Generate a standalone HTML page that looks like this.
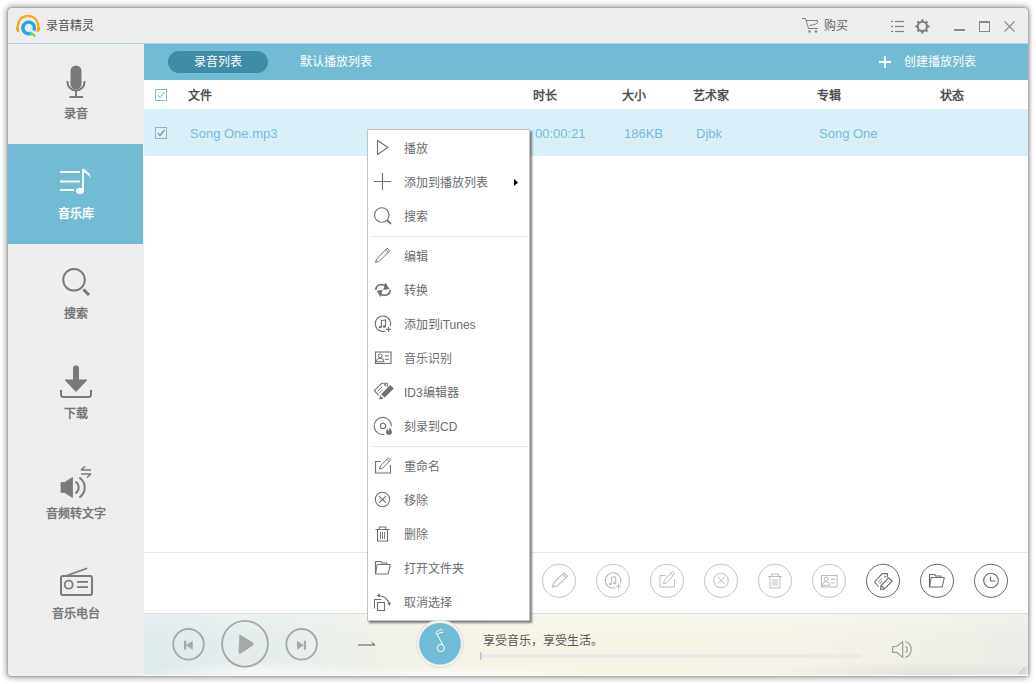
<!DOCTYPE html>
<html lang="zh-CN"><head><meta charset="utf-8">
<style>
*{margin:0;padding:0;box-sizing:border-box}
html,body{width:1036px;height:684px;overflow:hidden;background:#fff;font-family:"Liberation Sans",sans-serif;font-size:12px}
.r{position:absolute}
.t{position:absolute;white-space:nowrap;line-height:16px;font-size:12px}
.b{font-weight:bold}
svg{position:absolute;left:0;top:0}
</style></head><body>

<div class="r" style="left:7px;top:7px;width:1022px;height:670px;background:#eeeeee;border:1px solid #adadad;border-radius:5px 5px 4px 4px;box-shadow:0 0 6px rgba(0,0,0,0.5)"></div>
<div class="r" style="left:8px;top:43px;width:1020px;height:1px;background:#a9d8ea;"></div>
<div class="t " style="left:46px;top:18px;color:#555;">录音精灵</div>
<div class="t " style="left:824px;top:18px;color:#666;">购买</div>
<div class="r" style="left:8px;top:144px;width:136px;height:100px;background:#72bbd5;"></div>
<div class="t b" style="left:64px;top:106px;color:#777;">录音</div>
<div class="t b" style="left:58px;top:206px;color:#fff;">音乐库</div>
<div class="t b" style="left:64px;top:306px;color:#777;">搜索</div>
<div class="t b" style="left:64px;top:406px;color:#777;">下载</div>
<div class="t b" style="left:46px;top:506px;color:#777;">音频转文字</div>
<div class="t b" style="left:52px;top:606px;color:#777;">音乐电台</div>
<div class="r" style="left:144px;top:44px;width:884px;height:632px;background:#ffffff;"></div>
<div class="r" style="left:143px;top:44px;width:1px;height:632px;background:#f4efee;"></div>
<div class="r" style="left:144px;top:44px;width:884px;height:36px;background:#72bbd5;"></div>
<div class="r" style="left:168px;top:51px;width:100px;height:22px;background:#3f8ca8;border-radius:11px"></div>
<div class="t " style="left:194px;top:54px;color:#fff;">录音列表</div>
<div class="t " style="left:300px;top:54px;color:#fff;">默认播放列表</div>
<div class="t " style="left:904px;top:54px;color:#fff;">创建播放列表</div>
<div class="t b" style="left:188px;top:88px;color:#505050;">文件</div>
<div class="t b" style="left:533px;top:88px;color:#505050;">时长</div>
<div class="t b" style="left:622px;top:88px;color:#505050;">大小</div>
<div class="t b" style="left:693px;top:88px;color:#505050;">艺术家</div>
<div class="t b" style="left:817px;top:88px;color:#505050;">专辑</div>
<div class="t b" style="left:940px;top:88px;color:#505050;">状态</div>
<div class="r" style="left:144px;top:109px;width:884px;height:47px;background:#d9f0f8;"></div>
<div class="t " style="left:190px;top:126px;color:#72bcd8;font-size:13px">Song One.mp3</div>
<div class="t " style="left:535px;top:126px;color:#72bcd8;font-size:13px">00:00:21</div>
<div class="t " style="left:624px;top:126px;color:#72bcd8;font-size:13px">186KB</div>
<div class="t " style="left:696px;top:126px;color:#72bcd8;font-size:13px">Djbk</div>
<div class="t " style="left:819px;top:126px;color:#72bcd8;font-size:13px">Song One</div>
<div class="r" style="left:144px;top:552px;width:884px;height:1px;background:#e8e8e8;"></div>
<div class="r" style="left:144px;top:613px;width:884px;height:63px;background:radial-gradient(ellipse 120px 10px at 120px 58px,rgba(255,255,255,0.6),rgba(255,255,255,0)),radial-gradient(ellipse 160px 8px at 300px 60px,rgba(255,255,255,0.45),rgba(255,255,255,0)),radial-gradient(ellipse 160px 14px at 780px 62px,rgba(200,200,195,0.35),rgba(200,200,195,0)),linear-gradient(180deg,rgba(255,255,255,0.25),rgba(255,255,255,0) 40%),linear-gradient(90deg,#dfeaed 0%,#e6eeec 15%,#f1f2e8 28%,#f7f5e7 40%,#f6f4e8 72%,#f1f0e8 90%,#ecece7 100%);"></div>
<div class="r" style="left:144px;top:613px;width:884px;height:1px;background:#dcdcdc;"></div>
<div class="r" style="left:144px;top:675px;width:884px;height:1px;background:#fbfbf8;"></div>
<div class="r" style="left:1030px;top:0px;width:6px;height:684px;background:linear-gradient(90deg,rgba(255,255,255,0),#fff 70%);"></div>
<div class="r" style="left:481px;top:654px;width:380px;height:4px;background:#e9ebeb;"></div>
<div class="t " style="left:483px;top:633px;color:#555;">享受音乐，享受生活。</div>
<div class="r" style="left:367px;top:129px;width:163px;height:492px;background:#fff;border:1px solid #c4c4c4;box-shadow:2px 2px 2px rgba(0,0,0,0.5)"></div>
<div class="t " style="left:404px;top:141px;color:#6c6c6c;">播放</div>
<div class="t " style="left:404px;top:175px;color:#6c6c6c;">添加到播放列表</div>
<div class="t " style="left:404px;top:209px;color:#6c6c6c;">搜索</div>
<div class="t " style="left:404px;top:249px;color:#6c6c6c;">编辑</div>
<div class="t " style="left:404px;top:283px;color:#6c6c6c;">转换</div>
<div class="t " style="left:404px;top:317px;color:#6c6c6c;">添加到iTunes</div>
<div class="t " style="left:404px;top:351px;color:#6c6c6c;">音乐识别</div>
<div class="t " style="left:404px;top:385px;color:#6c6c6c;">ID3编辑器</div>
<div class="t " style="left:404px;top:419px;color:#6c6c6c;">刻录到CD</div>
<div class="t " style="left:404px;top:459px;color:#6c6c6c;">重命名</div>
<div class="t " style="left:404px;top:493px;color:#6c6c6c;">移除</div>
<div class="t " style="left:404px;top:527px;color:#6c6c6c;">删除</div>
<div class="t " style="left:404px;top:561px;color:#6c6c6c;">打开文件夹</div>
<div class="t " style="left:404px;top:595px;color:#6c6c6c;">取消选择</div>
<div class="r" style="left:371px;top:236px;width:156px;height:1px;background:#e6e6e6;"></div>
<div class="r" style="left:371px;top:446px;width:156px;height:1px;background:#e6e6e6;"></div>
<svg width="1036" height="684" viewBox="0 0 1036 684"><path d="M17.8,26 A10.2,10.2 0 0 1 38.2,26" fill="none" stroke="#fba91a" stroke-width="2.2"/><path d="M18.5,25.3 Q16,25.5 15.8,28.7 Q16,32 19.5,32.2 Z" fill="#fba91a"/><path d="M37.5,25.3 Q40,25.5 40.2,28.7 Q40,32 36.5,32.2 Z" fill="#fba91a"/><path d="M31.8,32.8 A5.8,5.8 0 1 1 33.8,30.6" fill="none" stroke="#1fa9ec" stroke-width="3.4"/><path d="M30.8,32.8 L34.5,35.6" fill="none" stroke="#73d34c" stroke-width="2.2" stroke-linecap="round"/><path d="M802,18.5 H805.5 L808.5,28.5 H818 M806.5,20.5 H817.5 V22.5 Q817,24.5 809.5,25.5" fill="none" stroke="#808080" stroke-width="1"/><circle cx="809.5" cy="31.5" r="1.2" fill="#808080"/><circle cx="816" cy="31.5" r="1.2" fill="#808080"/><rect x="891" y="20.9" width="2" height="1.2" fill="#808080"/><rect x="895" y="20.9" width="9" height="1.2" fill="#808080"/><rect x="891" y="25.9" width="2" height="1.2" fill="#808080"/><rect x="895" y="25.9" width="9" height="1.2" fill="#808080"/><rect x="891" y="30.9" width="2" height="1.2" fill="#808080"/><rect x="895" y="30.9" width="9" height="1.2" fill="#808080"/><circle cx="922.4" cy="26.4" r="4.6" fill="none" stroke="#808080" stroke-width="2.1"/><line x1="927.40" y1="26.40" x2="929.50" y2="26.40" stroke="#808080" stroke-width="2.2"/><line x1="925.94" y1="29.94" x2="927.42" y2="31.42" stroke="#808080" stroke-width="2.2"/><line x1="922.40" y1="31.40" x2="922.40" y2="33.50" stroke="#808080" stroke-width="2.2"/><line x1="918.86" y1="29.94" x2="917.38" y2="31.42" stroke="#808080" stroke-width="2.2"/><line x1="917.40" y1="26.40" x2="915.30" y2="26.40" stroke="#808080" stroke-width="2.2"/><line x1="918.86" y1="22.86" x2="917.38" y2="21.38" stroke="#808080" stroke-width="2.2"/><line x1="922.40" y1="21.40" x2="922.40" y2="19.30" stroke="#808080" stroke-width="2.2"/><line x1="925.94" y1="22.86" x2="927.42" y2="21.38" stroke="#808080" stroke-width="2.2"/><rect x="954" y="29" width="11" height="2" fill="#8a8a8a"/><rect x="979.5" y="21.5" width="10" height="10" fill="none" stroke="#8a8a8a" stroke-width="1"/><rect x="979" y="21" width="11" height="2" fill="#8a8a8a"/><path d="M1004.5,21.5 L1014.5,31.5 M1014.5,21.5 L1004.5,31.5" stroke="#8a8a8a" stroke-width="1.1"/><rect x="70.5" y="65.5" width="11" height="24" rx="5.5" fill="#7a7a7a"/><path d="M67.5,81 V82 A8.5,8.5 0 0 0 84.5,82 V81" fill="none" stroke="#7a7a7a" stroke-width="2"/><rect x="75" y="90" width="2" height="6" fill="#7a7a7a"/><rect x="69.5" y="96" width="13.5" height="2" fill="#7a7a7a"/><rect x="60" y="171" width="20" height="2" fill="#fff"/><rect x="60" y="180.5" width="20" height="2" fill="#fff"/><rect x="60" y="189" width="14" height="2" fill="#fff"/><rect x="82" y="169" width="2" height="22" fill="#fff"/><ellipse cx="80" cy="191" rx="4" ry="3.3" fill="#fff"/><path d="M83,168.5 Q89.5,171.5 91.2,178.5 Q88.5,174 83,172 Z" fill="#fff"/><circle cx="74" cy="279.8" r="10.8" fill="none" stroke="#7a7a7a" stroke-width="2"/><line x1="83.5" y1="289.5" x2="89" y2="295" stroke="#7a7a7a" stroke-width="3"/><rect x="73" y="365.5" width="6" height="16" rx="2.5" fill="#7a7a7a"/><path d="M65,380 H87 L76,391.5 Z" fill="#7a7a7a" stroke="#7a7a7a" stroke-width="1" stroke-linejoin="round"/><path d="M61,390 V394.5 Q61,397 63.5,397 H88.5 Q91,397 91,394.5 V390" fill="none" stroke="#7a7a7a" stroke-width="2"/><path d="M61,482.5 H64.5 L72.5,477.5 V497.5 L64.5,492.5 H61 Z" fill="#7a7a7a" stroke="#7a7a7a" stroke-width="0.8" stroke-linejoin="round"/><path d="M76,482 A7,7 0 0 1 76,493" fill="none" stroke="#7a7a7a" stroke-width="2" stroke-linecap="round"/><path d="M80,478 A12,12 0 0 1 80,497" fill="none" stroke="#7a7a7a" stroke-width="2" stroke-linecap="round"/><path d="M81,470 H91 M81,470 L85,466.5 M91,474 H81 M91,474 L87,477.5" fill="none" stroke="#7a7a7a" stroke-width="1.6"/><rect x="61" y="576" width="31" height="19" rx="2" fill="none" stroke="#7a7a7a" stroke-width="2"/><line x1="67" y1="575.5" x2="86.5" y2="568.5" stroke="#7a7a7a" stroke-width="1.8" stroke-linecap="round"/><circle cx="68.7" cy="584.7" r="4" fill="none" stroke="#7a7a7a" stroke-width="1.8"/><rect x="77" y="581" width="11" height="1.8" fill="#7a7a7a"/><rect x="77" y="586.2" width="11" height="1.8" fill="#7a7a7a"/><rect x="879" y="61" width="12" height="2" fill="#fff"/><rect x="884" y="56" width="2" height="12" fill="#fff"/><rect x="155.5" y="89.5" width="11" height="11" fill="#fff" stroke="#7fbcd2" stroke-width="1"/><path d="M157.8,95 L160,97.5 L164.5,92" fill="none" stroke="#a6d2d6" stroke-width="1.3"/><rect x="155.5" y="127.5" width="11" height="11" fill="#ececec" stroke="#7fbcd2" stroke-width="1"/><path d="M157.8,133 L160,135.5 L164.5,130" fill="none" stroke="#5f9fb6" stroke-width="1.3"/><path d="M377.5,140.5 L388,147.5 L377.5,154.5 Z" fill="none" stroke="#707070" stroke-width="1.1" stroke-linejoin="round"/><path d="M374,181.5 H391 M382.5,173 V190" stroke="#707070" stroke-width="1.1"/><circle cx="381.8" cy="215" r="7.3" fill="none" stroke="#707070" stroke-width="1.1"/><line x1="387" y1="220" x2="391" y2="224" stroke="#707070" stroke-width="1.8"/><path d="M375.50,262.50 L379.32,261.23 L389.77,250.77 L387.23,248.23 L376.77,258.68 Z" fill="none" stroke="#707070" stroke-width="1.0" stroke-linejoin="round"/><line x1="388.22" y1="252.33" x2="385.67" y2="249.78" stroke="#707070" stroke-width="1.0"/><path d="M375.6,290 Q376.3,284.6 381.8,284.5 Q384.3,284.6 386,286.3" fill="none" stroke="#707070" stroke-width="1.7"/><path d="M385.4,282.6 L389.4,289 L383.3,289.9 Z" fill="#707070"/><g transform="rotate(180 383 289.9)"><path d="M375.6,290 Q376.3,284.6 381.8,284.5 Q384.3,284.6 386,286.3" fill="none" stroke="#707070" stroke-width="1.7"/><path d="M385.4,282.6 L389.4,289 L383.3,289.9 Z" fill="#707070"/></g><path d="M390.20,326.40 A7.7,7.7 0 1 0 385.50,331.00" fill="none" stroke="#707070" stroke-width="1.1"/><path d="M381.40,326.90 V320.50 L385.60,320.00 V326.30" fill="none" stroke="#707070" stroke-width="1.1" stroke-linejoin="round"/><ellipse cx="380.20" cy="327.10" rx="1.5" ry="1.2" fill="#707070"/><ellipse cx="384.40" cy="326.50" rx="1.5" ry="1.2" fill="#707070"/><path d="M386.00,329.40 H391.00 M388.50,326.90 V331.90" stroke="#707070" stroke-width="1.1"/><rect x="375.5" y="352.0" width="15.5" height="11.5" fill="none" stroke="#707070" stroke-width="1.1"/><circle cx="380.15" cy="355.80" r="2" fill="none" stroke="#707070" stroke-width="1"/><path d="M376.15,361.80 Q376.65,358.17 380.15,358.17 Q383.65,358.17 384.15,361.80 Z" fill="none" stroke="#707070" stroke-width="1"/><path d="M384.92,355.87 H389.00 M384.92,359.32 H389.00" stroke="#707070" stroke-width="1"/><path d="M378.5,395.4 L374.3,390.6 L381.8,383.2 H387.3 V386.8" fill="none" stroke="#707070" stroke-width="1.1" stroke-linejoin="round"/><circle cx="385" cy="385" r="1" fill="#707070"/><path d="M377.6,391.4 L382,387 M379.6,392.6 L382.6,389.6" stroke="#707070" stroke-width="1"/><path d="M384.5,397.7 L381.1,394.3 L390.3,385.1 L393.7,388.5 Z M379.4,399.4 L380.1,395.3 L383.5,398.7 Z" fill="#707070"/><path d="M391.4,426.2 A8.6,8.6 0 1 0 384.4,434.4" fill="none" stroke="#707070" stroke-width="1.1"/><circle cx="383" cy="425.9" r="2.6" fill="none" stroke="#707070" stroke-width="1.1"/><path d="M386.2,433 Q385.6,430.5 387.5,428.4 Q387.9,430.3 388.9,431.2 Q389.3,429 389.6,427.3 Q391.5,429.5 392,431.8 Q392.2,434.4 390.2,434.8 H387.6 Q386.4,434.4 386.2,433 Z" fill="#707070"/><path d="M381.00,461.50 H375.50 V473.00 H390.50 V465.00" fill="none" stroke="#707070" stroke-width="1.1"/><path d="M379.50,469.00 L382.89,467.87 L390.63,460.13 L388.37,457.87 L380.63,465.61 Z" fill="none" stroke="#707070" stroke-width="1.0" stroke-linejoin="round"/><line x1="389.08" y1="461.69" x2="386.81" y2="459.42" stroke="#707070" stroke-width="1.0"/><circle cx="382.5" cy="499.5" r="7.2" fill="none" stroke="#707070" stroke-width="1.1"/><path d="M379.04,496.04 L385.96,502.96 M385.96,496.04 L379.04,502.96" stroke="#707070" stroke-width="1.1"/><path d="M375.50,529.50 H389.50 M379.30,529.50 V527.00 H385.70 V529.50 M377.50,529.50 V541.00 H387.50 V529.50" fill="none" stroke="#707070" stroke-width="1.1"/><path d="M380.50,532.00 V539.00 M382.50,532.00 V539.00 M384.50,532.00 V539.00" stroke="#707070" stroke-width="0.9"/><path d="M375.5,574 V561.5 H380.5 L382,563 H387 V564.5" fill="none" stroke="#707070" stroke-width="1.1" stroke-linejoin="round"/><path d="M375.5,574 L377.2,564.5 H390.3 L388.2,574 Z" fill="none" stroke="#707070" stroke-width="1.1" stroke-linejoin="round"/><rect x="377.5" y="602.5" width="7" height="8" fill="none" stroke="#707070" stroke-width="1.1"/><path d="M374.5,608.5 V599.5 H381.5" fill="none" stroke="#707070" stroke-width="1.1"/><path d="M378.5,595.8 Q386.5,596 389.3,603.5" fill="none" stroke="#707070" stroke-width="1.1"/><path d="M376.5,595.5 L380,593.5 L379.8,597.5 Z M389.5,606 L387.2,602.8 L391.2,602.6 Z" fill="#707070"/><path d="M514,179 L518,182.5 L514,186 Z" fill="#000"/><circle cx="559" cy="580.8" r="16.5" fill="none" stroke="#c4c4c4" stroke-width="1"/><circle cx="613" cy="580.8" r="16.5" fill="none" stroke="#c4c4c4" stroke-width="1"/><circle cx="667" cy="580.8" r="16.5" fill="none" stroke="#c4c4c4" stroke-width="1"/><circle cx="721" cy="580.8" r="16.5" fill="none" stroke="#c4c4c4" stroke-width="1"/><circle cx="775" cy="580.8" r="16.5" fill="none" stroke="#c4c4c4" stroke-width="1"/><circle cx="829" cy="580.8" r="16.5" fill="none" stroke="#c4c4c4" stroke-width="1"/><circle cx="883" cy="580.8" r="16.5" fill="none" stroke="#6a6a6a" stroke-width="1"/><circle cx="937" cy="580.8" r="16.5" fill="none" stroke="#6a6a6a" stroke-width="1"/><circle cx="991" cy="580.8" r="16.5" fill="none" stroke="#6a6a6a" stroke-width="1"/><path d="M552.30,587.30 L557.42,585.70 L567.46,576.03 L564.14,572.57 L554.09,582.24 Z" fill="none" stroke="#bdbdbd" stroke-width="1.1" stroke-linejoin="round"/><line x1="565.88" y1="577.55" x2="562.55" y2="574.10" stroke="#bdbdbd" stroke-width="1.1"/><path d="M620.30,583.20 A7.7,7.7 0 1 0 615.60,587.80" fill="none" stroke="#bdbdbd" stroke-width="1.1"/><path d="M611.50,583.70 V577.30 L615.70,576.80 V583.10" fill="none" stroke="#bdbdbd" stroke-width="1.1" stroke-linejoin="round"/><ellipse cx="610.30" cy="583.90" rx="1.5" ry="1.2" fill="#bdbdbd"/><ellipse cx="614.50" cy="583.30" rx="1.5" ry="1.2" fill="#bdbdbd"/><path d="M616.10,586.20 H621.10 M618.60,583.70 V588.70" stroke="#bdbdbd" stroke-width="1.1"/><path d="M665.50,575.50 H660.00 V587.00 H674.50 V579.00" fill="none" stroke="#bdbdbd" stroke-width="1.0"/><path d="M663.50,584.00 L667.01,582.55 L674.78,573.62 L672.22,571.38 L664.45,580.32 Z" fill="none" stroke="#bdbdbd" stroke-width="1.0" stroke-linejoin="round"/><line x1="673.34" y1="575.28" x2="670.77" y2="573.04" stroke="#bdbdbd" stroke-width="1.0"/><circle cx="721" cy="580.5" r="7.3" fill="none" stroke="#bdbdbd" stroke-width="1.0"/><path d="M717.50,577.00 L724.50,584.00 M724.50,577.00 L717.50,584.00" stroke="#bdbdbd" stroke-width="1.0"/><path d="M768.00,576.50 H782.00 M771.80,576.50 V574.00 H778.20 V576.50 M770.00,576.50 V588.00 H780.00 V576.50" fill="none" stroke="#bdbdbd" stroke-width="1.0"/><path d="M773.00,579.00 V586.00 M775.00,579.00 V586.00 M777.00,579.00 V586.00" stroke="#bdbdbd" stroke-width="0.9"/><rect x="821.5" y="575.5" width="15.5" height="11.5" fill="none" stroke="#bdbdbd" stroke-width="1.1"/><circle cx="826.15" cy="579.29" r="2" fill="none" stroke="#bdbdbd" stroke-width="1"/><path d="M822.15,585.30 Q822.65,581.67 826.15,581.67 Q829.65,581.67 830.15,585.30 Z" fill="none" stroke="#bdbdbd" stroke-width="1"/><path d="M830.92,579.37 H835.00 M830.92,582.82 H835.00" stroke="#bdbdbd" stroke-width="1"/><path d="M878.5,586.5 L874.5,582 L882.2,573.6 H887.4 V577.4" fill="none" stroke="#6a6a6a" stroke-width="1.1" stroke-linejoin="round"/><circle cx="885" cy="576.6" r="0.9" fill="#6a6a6a"/><path d="M878,582.2 L882,578.4 M879.6,583.8 L882.6,580.8" stroke="#6a6a6a" stroke-width="0.9"/><path d="M880.60,589.40 L884.42,588.98 L892.20,581.20 L888.80,577.80 L881.02,585.58 Z" fill="none" stroke="#6a6a6a" stroke-width="1.1" stroke-linejoin="round"/><line x1="884.42" y1="588.98" x2="881.02" y2="585.58" stroke="#6a6a6a" stroke-width="1.1"/><path d="M929.5,587 V574.5 H934.5 L936,576 H941 V577.5" fill="none" stroke="#6a6a6a" stroke-width="1.1" stroke-linejoin="round"/><path d="M929.5,587 L931.2,577.5 H944.3 L942.2,587 Z" fill="none" stroke="#6a6a6a" stroke-width="1.1" stroke-linejoin="round"/><circle cx="991" cy="580.5" r="7.3" fill="none" stroke="#6a6a6a" stroke-width="1.1"/><path d="M990.5,576.5 V581 H995.5" fill="none" stroke="#6a6a6a" stroke-width="1.1"/><circle cx="188.5" cy="644.3" r="15.3" fill="none" stroke="#a8a8a8" stroke-width="1.9"/><rect x="184" y="640.7" width="2.3" height="9" fill="#a8a8a8"/><path d="M192.7,640.7 L186,645.2 L192.7,649.7 Z" fill="#a8a8a8"/><circle cx="245" cy="643.8" r="22.9" fill="none" stroke="#a8a8a8" stroke-width="1.9"/><path d="M240,636 Q239,635 240.5,635.5 L252.5,643 Q253.5,644 252.5,645 L240.5,653 Q239,653.5 239,652 Z" fill="#a8a8a8" stroke="#a8a8a8" stroke-width="1.2" stroke-linejoin="round"/><circle cx="301.6" cy="644.3" r="15.3" fill="none" stroke="#a8a8a8" stroke-width="1.9"/><rect x="303.8" y="640.7" width="2.3" height="9" fill="#a8a8a8"/><path d="M297,640.7 L303.8,645.2 L297,649.7 Z" fill="#a8a8a8"/><path d="M358,645 H375 L371.5,642.3" fill="none" stroke="#555" stroke-width="1"/><circle cx="440" cy="643.8" r="22.2" fill="none" stroke="#f2f1ec" stroke-width="3"/><circle cx="440" cy="643.8" r="23.6" fill="none" stroke="#dedcd6" stroke-width="0.8"/><circle cx="440" cy="643.8" r="20.8" fill="#72bbd5"/><path d="M436,632.3 L443,645.3 M436,632.3 Q438.5,630 442,629.3 M436.8,634.6 Q439.5,632.5 443.4,632" fill="none" stroke="#fff" stroke-width="1"/><circle cx="440.8" cy="648" r="3.6" fill="none" stroke="#fff" stroke-width="1"/><rect x="480.3" y="652" width="1" height="8" fill="#93b3c3"/><path d="M892.6,646.5 H896.6 L902.7,641.6 V657.4 L896.6,652.3 H892.6 Z" fill="none" stroke="#9c9c9c" stroke-width="1.2" stroke-linejoin="round"/><path d="M905.6,646.6 A3.2,3.2 0 0 1 905.6,652.4" fill="none" stroke="#9c9c9c" stroke-width="1.2"/><path d="M905.3,641.5 A8.4,8.4 0 0 1 905.3,657.5" fill="none" stroke="#9c9c9c" stroke-width="1.2"/><path d="M1026,666.5 L1018.5,674 M1026,669.5 L1021.5,674 M1026,672.5 L1024.5,674" stroke="#a8a8a8" stroke-width="0.8"/></svg>
</body></html>
